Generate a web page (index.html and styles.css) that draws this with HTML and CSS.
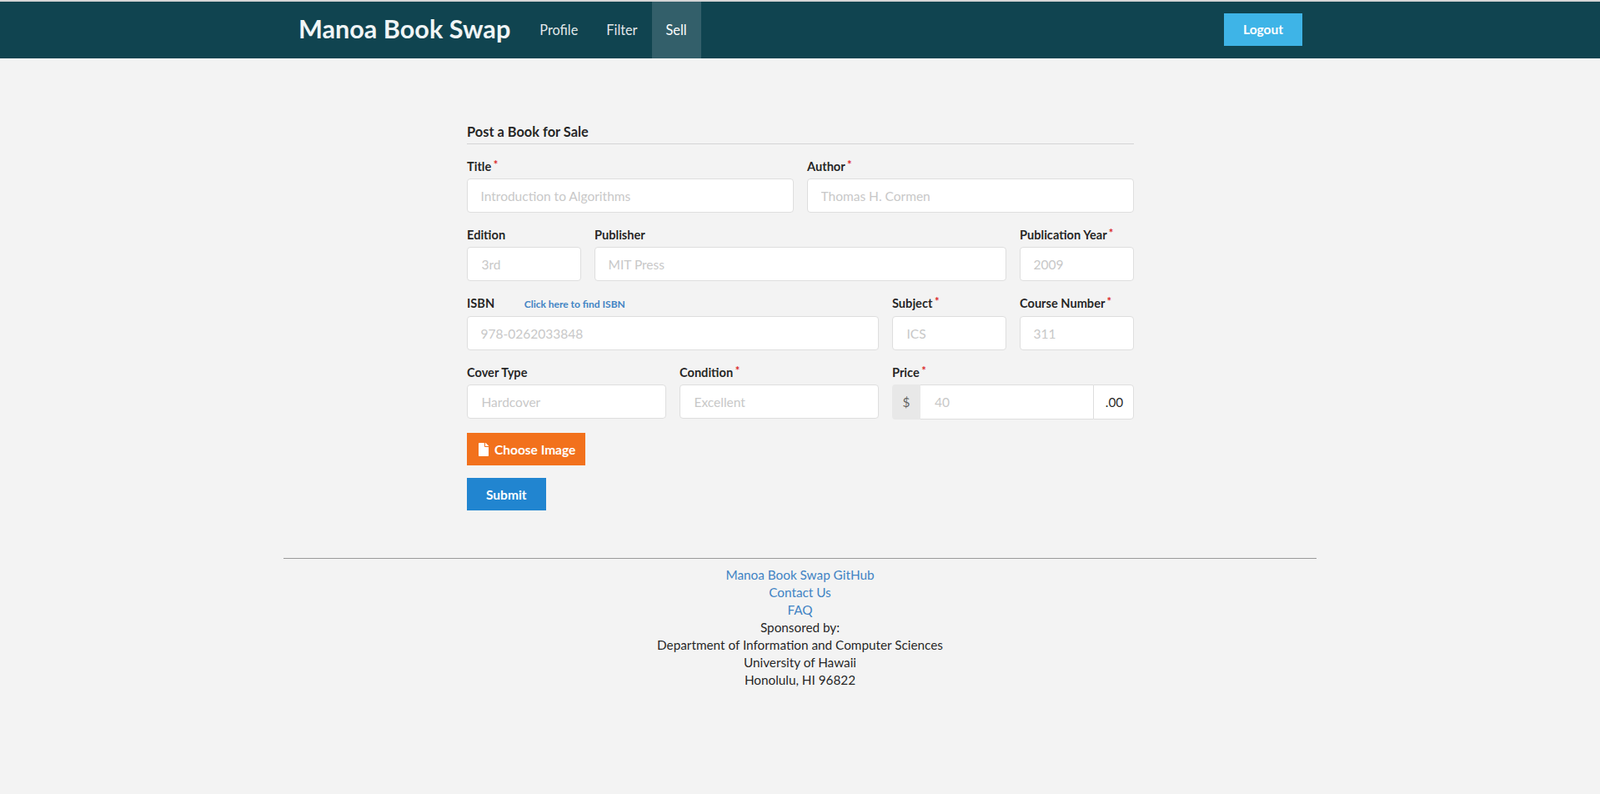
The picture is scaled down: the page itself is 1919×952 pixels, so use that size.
FILE: index.html
```html
<!DOCTYPE html>
<html lang="en">
<head>
  <meta charset="UTF-8">
  <meta name="viewport" content="width=device-width, initial-scale=1.0">
  <title>Manoa Book Swap</title>
  <link rel="stylesheet" href="styles.css">
</head>
<body>
  <nav class="navbar">
    <div class="container navbar-inner">
      <a class="brand" href="#">Manoa Book Swap</a>
      <a class="nav-item" href="#">Profile</a>
      <a class="nav-item" href="#">Filter</a>
      <a class="nav-item active" href="#">Sell</a>
      <button class="btn btn-logout" type="button">Logout</button>
    </div>
  </nav>

  <main class="sell-page">
    <form class="sell-form">
      <h4 class="form-title">Post a Book for Sale</h4>

      <div class="fields">
        <div class="field span-8">
          <label>Title <span class="req">*</span></label>
          <input type="text" placeholder="Introduction to Algorithms">
        </div>
        <div class="field span-8">
          <label>Author <span class="req">*</span></label>
          <input type="text" placeholder="Thomas H. Cormen">
        </div>
      </div>

      <div class="fields">
        <div class="field span-3 roomy">
          <label>Edition</label>
          <input type="text" placeholder="3rd">
        </div>
        <div class="field span-10">
          <label>Publisher</label>
          <input type="text" placeholder="MIT Press">
        </div>
        <div class="field span-3">
          <label>Publication Year <span class="req">*</span></label>
          <input type="text" placeholder="2009">
        </div>
      </div>

      <div class="fields tall-label">
        <div class="field span-10">
          <label class="isbn-label">ISBN <a class="isbn-link" href="#">Click here to find ISBN</a></label>
          <input type="text" placeholder="978-0262033848">
        </div>
        <div class="field span-3 roomy">
          <label>Subject <span class="req">*</span></label>
          <input type="text" placeholder="ICS">
        </div>
        <div class="field span-3">
          <label>Course Number <span class="req">*</span></label>
          <input type="text" placeholder="311">
        </div>
      </div>

      <div class="fields last">
        <div class="field span-5 roomy">
          <label>Cover Type</label>
          <input type="text" placeholder="Hardcover">
        </div>
        <div class="field span-5 roomy">
          <label>Condition <span class="req">*</span></label>
          <input type="text" placeholder="Excellent">
        </div>
        <div class="field span-6">
          <label>Price <span class="req">*</span></label>
          <div class="price-input">
            <span class="price-prefix">$</span>
            <input type="text" placeholder="40">
            <span class="price-suffix">.00</span>
          </div>
        </div>
      </div>

      <button class="btn btn-orange" type="button">
        <svg class="file-icon" viewBox="0 0 384 512" aria-hidden="true"><path d="M224 136V0H24C10.7 0 0 10.7 0 24v464c0 13.3 10.7 24 24 24h336c13.3 0 24-10.7 24-24V160H248c-13.2 0-24-10.8-24-24zm160-14.1v6.1H256V0h6.1c6.4 0 12.5 2.5 17 7l97.9 98c4.5 4.5 7 10.6 7 16.9z"/></svg>
        Choose Image
      </button>
      <button class="btn btn-blue" type="submit">Submit</button>
    </form>
  </main>

  <footer class="container footer">
    <a href="#">Manoa Book Swap GitHub</a><br>
    <a href="#">Contact Us</a><br>
    <a href="#">FAQ</a><br>
    Sponsored by:<br>
    Department of Information and Computer Sciences<br>
    University of Hawaii<br>
    Honolulu, HI 96822
  </footer>
</body>
</html>
```

FILE: styles.css
```css
* {
  box-sizing: border-box;
}

body {
  margin: 0;
  min-height: 100vh;
  font-family: Lato, "Helvetica Neue", Arial, sans-serif;
  font-size: 15.3px;
  line-height: 21px;
  color: rgba(0, 0, 0, 0.87);
  background: #f3f3f3;
}

a {
  color: #4183c4;
  text-decoration: none;
}

.container {
  width: 1239px;
  margin: 0 auto;
}

/* Top bar */
.navbar {
  height: 70px;
  background: #104450;
  border-top: 2px solid #d4d4d5;
}

.navbar-inner {
  display: flex;
  align-items: stretch;
  height: 100%;
  padding: 0 17px 0 18px;
}

.brand {
  padding: 0 18px 2px 0;
  align-self: center;
  font-size: 30.6px;
  line-height: 36px;
  font-weight: 700;
  color: #f0f5f6;
}

.nav-item {
  display: flex;
  align-items: center;
  padding: 0 17px 2px;
  font-size: 16.3px;
  color: rgba(255, 255, 255, 0.9);
}

.nav-item.active {
  background: rgba(255, 255, 255, 0.15);
  color: #fff;
}

.btn {
  display: block;
  height: 39px;
  padding: 0 23px;
  border: none;
  font-family: inherit;
  font-size: 15.5px;
  font-weight: 700;
  color: #fff;
  cursor: pointer;
}

.btn-logout {
  align-self: center;
  margin: 0 0 2px auto;
  background: #3eb4e7;
}

.btn-orange {
  display: flex;
  align-items: center;
  gap: 7px;
  padding: 0 12px 0 14px;
  margin-bottom: 15px;
  background: #f2711c;
}

.btn-blue {
  background: #2185d0;
}

.file-icon {
  width: 12px;
  height: 16px;
  fill: #fff;
}

/* Form */
.sell-page {
  padding: 78px 0 57px 1px;
}

.sell-form {
  width: 800px;
  margin: 0 auto;
}

.form-title {
  margin: 0 0 17px;
  padding-bottom: 4px;
  border-bottom: 1px solid #d4d4d5;
  font-size: 16.4px;
  line-height: 20px;
  font-weight: 700;
}

.fields {
  display: grid;
  grid-template-columns: repeat(16, 1fr);
  column-gap: 16px;
  margin-bottom: 17px;
}

.fields.last {
  margin-bottom: 16px;
}

.span-3 { grid-column: span 3; }
.span-5 { grid-column: span 5; }
.span-6 { grid-column: span 6; }
.span-8 { grid-column: span 8; }
.span-10 { grid-column: span 10; }

.field label {
  display: block;
  margin-bottom: 4px;
  font-size: 14.6px;
  line-height: 20px;
  font-weight: 700;
  white-space: nowrap;
}

.tall-label .field label {
  margin-bottom: 5px;
}

.req {
  position: relative;
  top: -3px;
  color: #db2828;
  font-size: 13px;
  line-height: 1;
  margin-left: -1px;
}

.isbn-link {
  margin-left: 32px;
  font-size: 12px;
  line-height: 1;
}

.field input {
  display: block;
  width: 100%;
  height: 41px;
  padding: 0 15.5px;
  border: 1px solid #dedede;
  border-radius: 4px;
  background: #fff;
  font-family: inherit;
  font-size: 15.5px;
  color: rgba(0, 0, 0, 0.87);
  outline: none;
}

.field.roomy input {
  padding-left: 16.5px;
}

.field input::placeholder {
  color: #c8c8c8;
}

.price-input {
  display: flex;
  height: 42px;
}

.price-input input {
  flex: 1;
  min-width: 0;
  height: 42px;
  padding-left: 17px;
  border-left: none;
  border-right: none;
  border-radius: 0;
}

.price-prefix {
  display: flex;
  align-items: center;
  justify-content: center;
  width: 34px;
  background: #e8e8e8;
  color: rgba(0, 0, 0, 0.6);
  border-radius: 4px 0 0 4px;
}

.price-suffix {
  display: flex;
  align-items: center;
  justify-content: center;
  width: 49px;
  padding-left: 2px;
  border: 1px solid #dedede;
  border-radius: 0 4px 4px 0;
  background: #fff;
}

/* Footer */
.footer {
  padding-top: 9px;
  border-top: 1px solid #999;
  text-align: center;
}
```
